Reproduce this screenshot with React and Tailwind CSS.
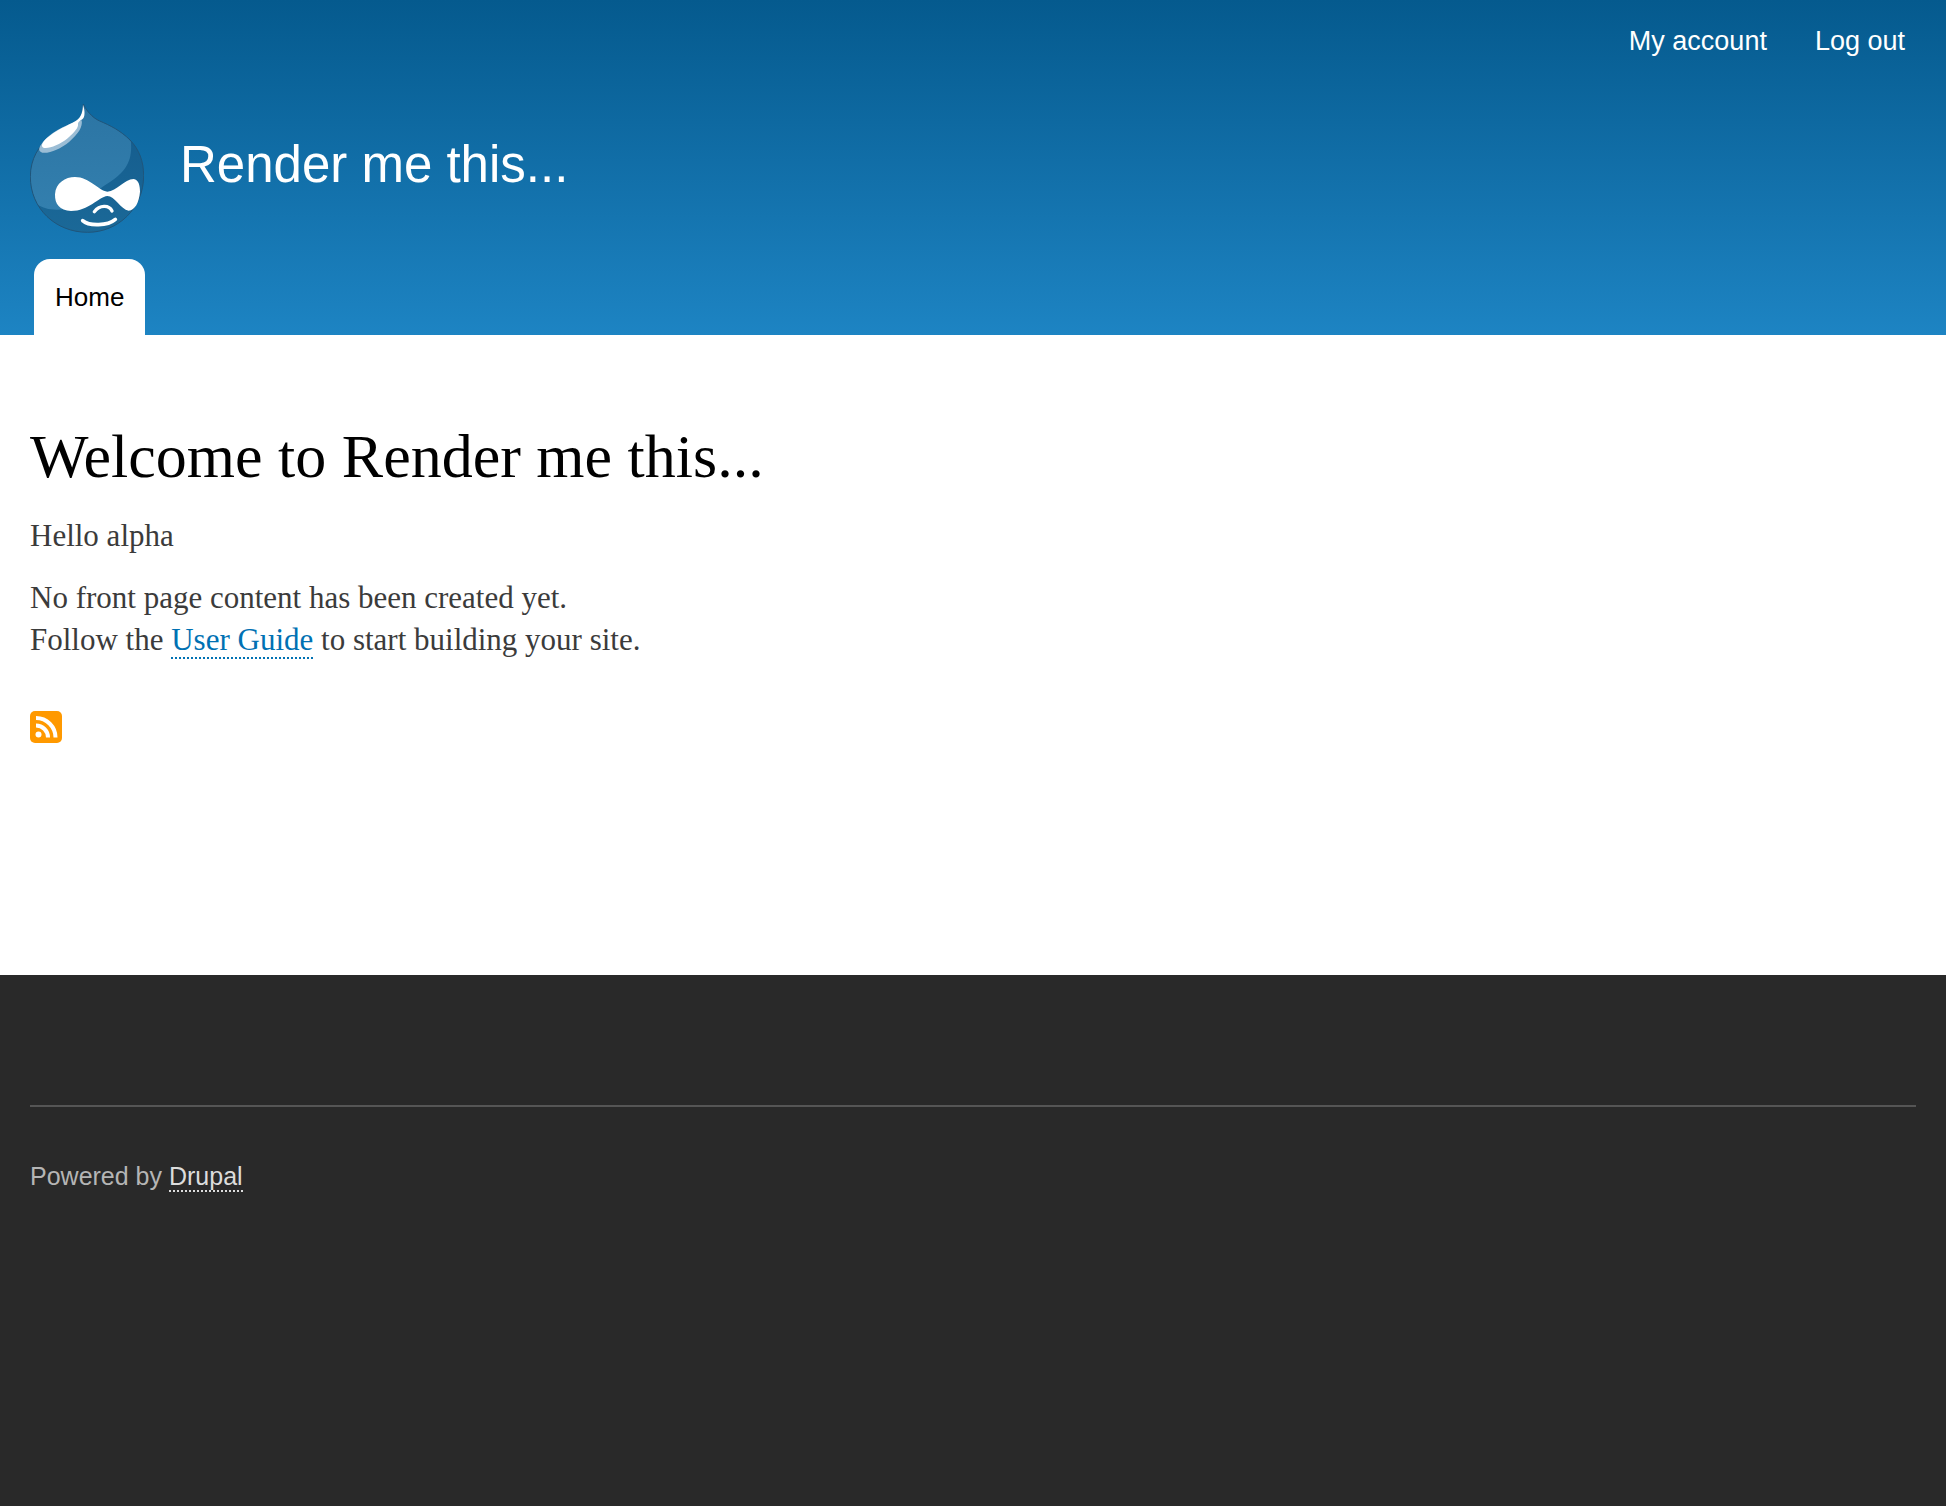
function DrupalLogo() {
  return (
    <svg viewBox="30 22 342 390" className="h-[130px] w-[114px] shrink-0" role="img" aria-label="Home">
      <defs>
        <linearGradient id="drop-dark" x1="0" y1="0" x2="0" y2="1">
          <stop offset="0.3" stopColor="#155e8f" />
          <stop offset="1" stopColor="#1b6998" />
        </linearGradient>
        <linearGradient id="drop-light" x1="0" y1="0" x2="0" y2="1">
          <stop offset="0" stopColor="#2b74a3" />
          <stop offset="1" stopColor="#337fae" />
        </linearGradient>
        <clipPath id="drop-clip">
          <path d="M190 25C197 42 216 66 239 76C270 89 302 105 330 133C357 160 371 197 371 240C371 338 294 410 203 410C107 410 31 339 31 243C31 190 57 148 90 125C122 103 155 92 174 76C187 64 189 44 190 25Z" />
        </clipPath>
      </defs>
      <g clipPath="url(#drop-clip)">
        <rect x="20" y="10" width="370" height="410" fill="url(#drop-dark)" />
        <path d="M20 10H290L332 128C339 195 322 230 248 273C210 300 170 342 110 342C86 342 68 337 50 325L20 280Z" fill="url(#drop-light)" />
      </g>
      <path d="M190 25C197 42 216 66 239 76C270 89 302 105 330 133C357 160 371 197 371 240C371 338 294 410 203 410C107 410 31 339 31 243C31 190 57 148 90 125C122 103 155 92 174 76C187 64 189 44 190 25Z" fill="none" stroke="#20557a" strokeWidth="3" />
      <path d="M185 74C189 94 174 116 148 138C121 160 89 174 67 171C54 168 56 157 64 146C90 108 150 82 185 74Z" fill="#9bbdd5" />
      <path d="M189 27C195 44 196 64 187 71C180 76 175 78 174 84C176 96 164 108 143 128C117 149 86 160 70 156C62 152 66 141 80 128C108 102 141 91 168 75C186 64 188 44 189 27Z" fill="#fff" />
      <path d="M105 296C107 262 136 244 165 244C209 244 235 285 262 288C290 287 313 250 341 250C356 252 360 270 360 288C357 321 345 343 326 345C302 341 284 301 262 301C235 304 206 346 153 346C119 345 104 325 105 296Z" fill="#fff" />
      <path d="M223 348C239 328 267 327 276 346" fill="none" stroke="#fff" strokeWidth="10" strokeLinecap="round" />
      <path d="M188 375C207 393 263 391 286 371C262 390 211 392 188 375Z" fill="#fff" stroke="#fff" strokeWidth="11" strokeLinejoin="round" />
    </svg>
  );
}

function FeedIcon() {
  return (
    <svg viewBox="0 0 32 32" className="size-8" aria-hidden="true">
      <rect width="32" height="32" rx="5" fill="#ff9900" />
      <circle cx="8.5" cy="23.5" r="3" fill="#fff" />
      <path d="M6 14.500A12 12 0 0 1 18 26.500M6 7A19.500 19.500 0 0 1 25.500 26.500" fill="none" stroke="#fff" strokeWidth="4" />
    </svg>
  );
}

export default function App() {
  return (
    <div className="flex min-h-screen flex-col bg-[#292929] font-['Liberation_Serif',serif] text-[#3b3b3b]">
      <header className="bg-linear-to-b from-[#055a8e] to-[#1d84c3] px-[30px] font-['Liberation_Sans',Arial,sans-serif] text-white">
        <nav aria-label="User account menu" className="flex justify-end gap-12 px-[11px] pt-[25px] text-[27px] leading-8">
          <a href="#account">My account</a>
          <a href="#logout">Log out</a>
        </nav>
        <div className="flex gap-9 pt-[46px]">
          <a href="#home">
            <DrupalLogo />
          </a>
          <a href="#home" className="pt-8 text-[51px] leading-[60px]">
            Render me this...
          </a>
        </div>
        <nav aria-label="Main navigation" className="flex px-1 pt-[26px]">
          <a href="#home" className="rounded-t-[16px] bg-white px-[21px] py-[22px] text-[26px] leading-8 text-black">
            Home
          </a>
        </nav>
      </header>

      <main className="bg-white px-[30px] pt-[86px] pb-[232px] text-[31px] leading-[42px]">
        <h1 className="text-[62px] leading-[70px] text-black">Welcome to Render me this...</h1>
        <p className="pt-6">Hello alpha</p>
        <p className="pt-5">
          No front page content has been created yet.
          <br />
          Follow the{" "}
          <a href="#guide" className="border-b-2 border-dotted border-[#0071b3] text-[#0071b3]">
            User Guide
          </a>{" "}
          to start building your site.
        </p>
        <a href="#feed" aria-label="Subscribe to the feed" className="mt-[50px] inline-block align-top">
          <FeedIcon />
        </a>
      </main>

      <footer className="px-[30px] pt-[130px] font-['Liberation_Sans',Arial,sans-serif] text-[25px] leading-8 text-[#b5b5b5]">
        <div className="border-t-2 border-[#555555] pt-[53px]">
          Powered by{" "}
          <a href="#drupal" className="border-b-2 border-dotted border-[#dcdcdc] text-[#dcdcdc]">
            Drupal
          </a>
        </div>
      </footer>
    </div>
  );
}
